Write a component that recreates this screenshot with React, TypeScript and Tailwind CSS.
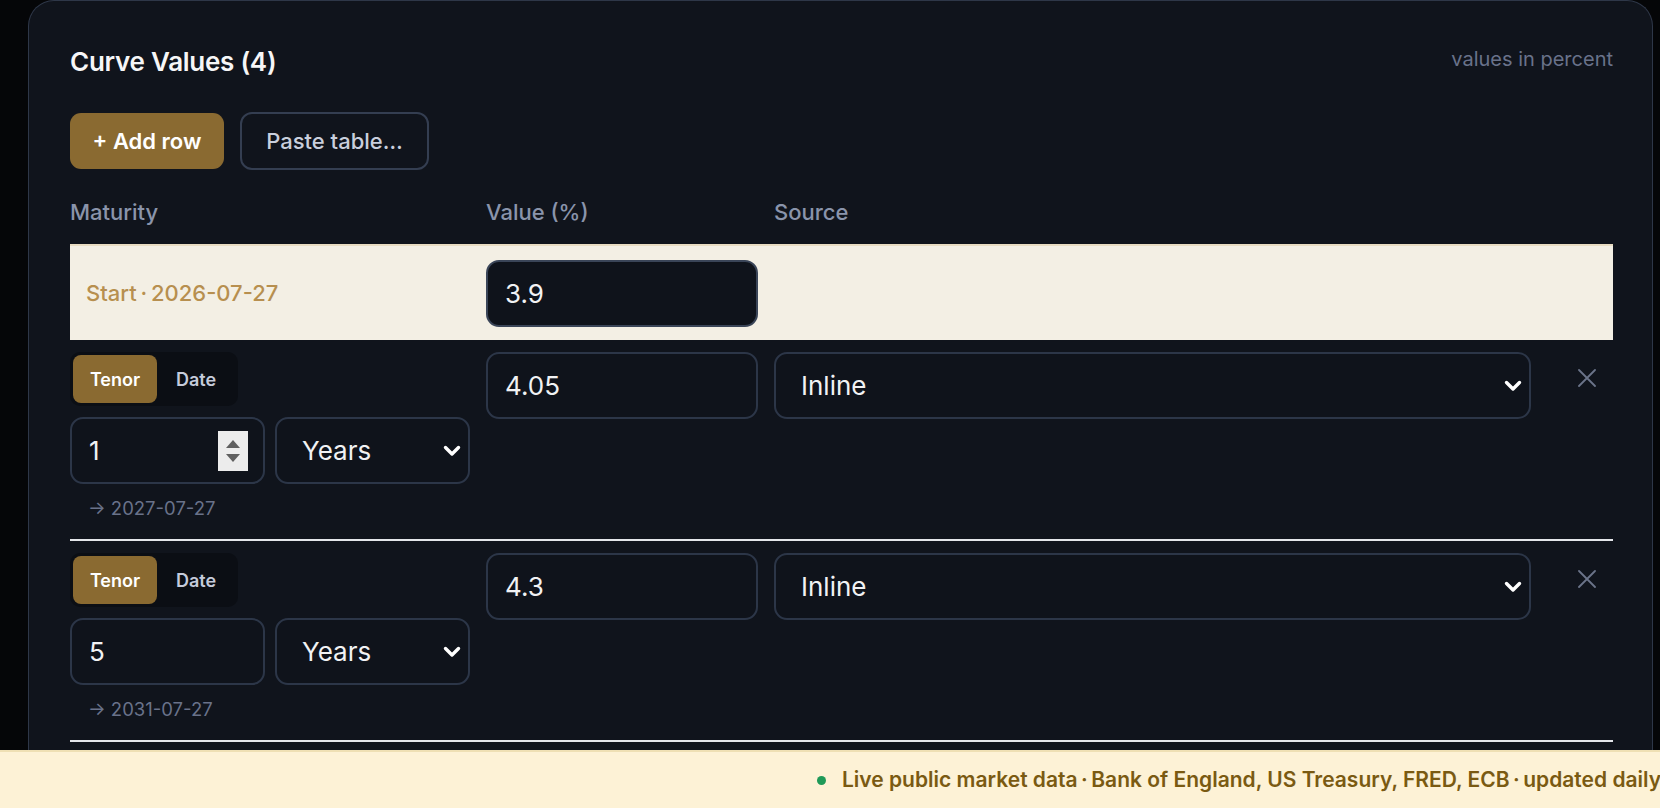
import { useState } from "react";

type Row = { id: number; amount: string; unit: string; value: string; source: string; date: string; spinner?: boolean };

const ROWS: Row[] = [
  { id: 1, amount: "1", unit: "Years", value: "4.05", source: "Inline", date: "2027-07-27", spinner: true },
  { id: 2, amount: "5", unit: "Years", value: "4.3", source: "Inline", date: "2031-07-27" },
];

const GRID = "grid grid-cols-[400px_272px_757px_1fr] gap-x-4";
const FIELD =
  "h-[67px] w-full rounded-[13px] border-2 border-[#2c3648] bg-[#0f131b] text-[26px] text-[#f1f2f4] outline-none";

function Chevron() {
  return (
    <svg width="18" height="12" viewBox="0 0 18 12" className="pointer-events-none absolute right-[9px] top-1/2 -translate-y-1/2">
      <path d="M2.5 2.5 9 9l6.5-6.5" fill="none" stroke="#ffffff" strokeWidth="3.4" strokeLinecap="round" strokeLinejoin="round" />
    </svg>
  );
}

function SelectBox({ value, options }: { value: string; options: string[] }) {
  return (
    <div className="relative">
      <select defaultValue={value} className={`${FIELD} appearance-none pl-[25px] pr-10`}>
        {options.map((o) => (
          <option key={o}>{o}</option>
        ))}
      </select>
      <Chevron />
    </div>
  );
}

function Spinner() {
  return (
    <div className="pointer-events-none absolute right-[17px] top-1/2 flex h-[40px] w-[30px] -translate-y-1/2 flex-col items-center justify-center gap-[6px] bg-[#ececec]">
      <span className="h-0 w-0 border-x-[7px] border-b-[8px] border-x-transparent border-b-[#5f5f5f]" />
      <span className="h-0 w-0 border-x-[7px] border-t-[8px] border-x-transparent border-t-[#5f5f5f]" />
    </div>
  );
}

function TenorRow({ row }: { row: Row }) {
  const [mode, setMode] = useState<"tenor" | "date">("tenor");
  return (
    <div className={`${GRID} border-b-2 border-[#e4e6ea] pt-3 pb-[19px]`}>
      <div>
        <div className="inline-flex rounded-[10px] bg-[#0b0e14] p-[3px]">
          <button
            onClick={() => setMode("tenor")}
            className={`h-[48px] w-[84px] rounded-[8px] text-[18px] font-semibold ${
              mode === "tenor" ? "bg-[#8a6a31] text-white" : "text-[#c5cbdb]"
            }`}
          >
            Tenor
          </button>
          <button
            onClick={() => setMode("date")}
            className={`h-[48px] w-[78px] rounded-[8px] text-[18px] font-semibold ${
              mode === "date" ? "bg-[#8a6a31] text-white" : "text-[#c5cbdb]"
            }`}
          >
            Date
          </button>
        </div>
        <div className="mt-[11px] grid grid-cols-2 gap-[10px]">
          <div className="relative">
            <input readOnly value={row.amount} className={`${FIELD} h-[66px] pl-[17px]`} />
            {row.spinner && <Spinner />}
          </div>
          <SelectBox value={row.unit} options={["Days", "Weeks", "Months", "Years"]} />
        </div>
        <div className="mt-3 pl-[18px] text-[18.5px] leading-6 text-[#69728a]">→ {row.date}</div>
      </div>
      <div>
        <input readOnly value={row.value} className={`${FIELD} pl-[17px]`} />
      </div>
      <div>
        <SelectBox value={row.source} options={["Inline", "Bank of England", "US Treasury", "FRED", "ECB"]} />
      </div>
      <div className="pt-[17px] pl-[31px]">
        <svg width="18" height="18" viewBox="0 0 18 18">
          <path d="M1 1l16 16M17 1 1 17" stroke="#6b7489" strokeWidth="1.8" strokeLinecap="round" />
        </svg>
      </div>
    </div>
  );
}

export default function App() {
  return (
    <div className="flex h-[808px] w-full flex-col overflow-hidden bg-[#050608] font-['Inter',sans-serif]">
      <main className="min-h-0 flex-1 overflow-hidden pl-[28px] pr-[7px]">
        <section className="h-full rounded-t-[26px] border border-b-0 border-[#2e3748] bg-[#10141c] pl-[41px] pr-[39px] pt-[42px]">
          <div className="flex h-[36px] items-center justify-between">
            <h2 className="text-[26px] font-semibold tracking-[-0.01em] text-[#f6f6f7]">Curve Values (4)</h2>
            <span className="-mt-[4px] text-[20px] text-[#69728a]">values in percent</span>
          </div>

          <div className="mt-[33px] flex h-[58px] items-center gap-4">
            <button className="h-[56px] w-[154px] rounded-[11px] bg-[#8a6a31] text-[22px] font-semibold text-white">
              + Add row
            </button>
            <button className="h-[58px] w-[189px] rounded-[12px] border-2 border-[#343e51] text-[22px] font-medium text-[#c9cfdd]">
              Paste table…
            </button>
          </div>

          <div className={`${GRID} mt-[28px] text-[22px] font-medium leading-7 text-[#8a94ab]`}>
            <span>Maturity</span>
            <span>Value (%)</span>
            <span>Source</span>
            <span />
          </div>

          <div className={`${GRID} mt-[18px] h-[96px] items-center border-t-2 border-[#e8dcc2] bg-[#f3efe4]`}>
            <span className="pl-4 text-[22px] font-medium text-[#b78f4f]">Start{"\u2009·\u2009"}2026-07-27</span>
            <input readOnly value="3.9" className={`${FIELD} border-[#3a4558] pl-[17px]`} />
            <span />
            <span />
          </div>

          {ROWS.map((row) => (
            <TenorRow key={row.id} row={row} />
          ))}
        </section>
      </main>

      <footer className="flex h-[58px] shrink-0 items-center overflow-hidden whitespace-nowrap border-t-2 border-[#efe0b4] bg-[#fdf2d6] pl-[817px]">
        <span className="mr-[16px] h-[9px] w-[9px] shrink-0 rounded-full bg-[#1f9a58]" />
        <span className="text-[21px] font-semibold text-[#7a5a12]">
          Live public market data{"\u2009·\u2009"}Bank of England, US Treasury, FRED, ECB{"\u2009·\u2009"}updated daily
        </span>
      </footer>
    </div>
  );
}
